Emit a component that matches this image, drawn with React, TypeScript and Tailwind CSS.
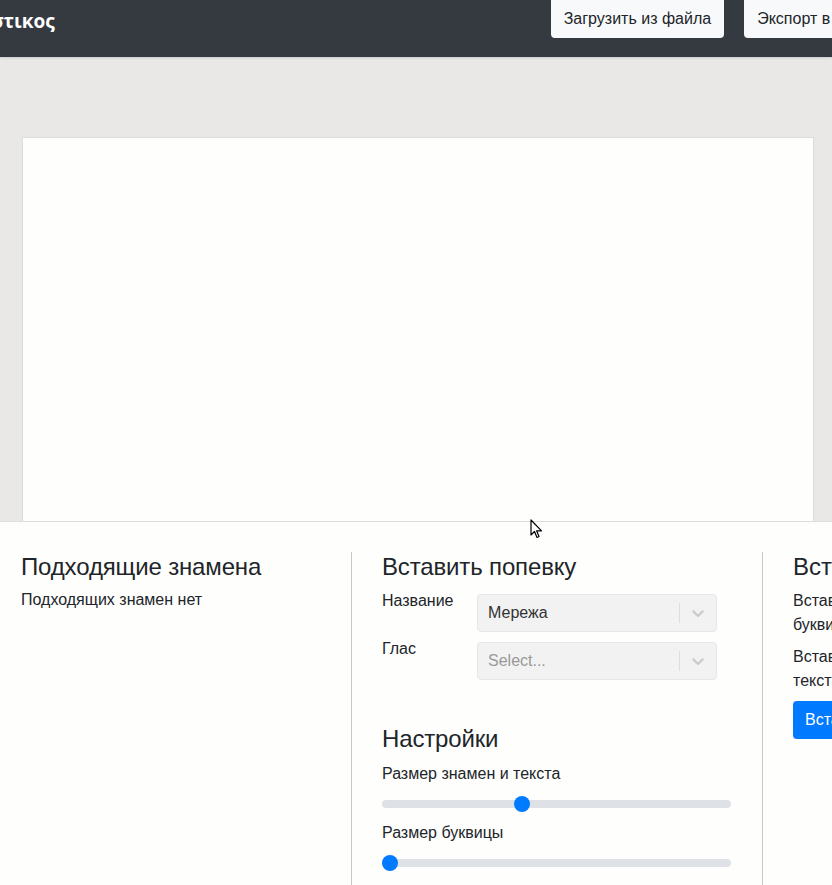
import React from "react";

const font = { fontFamily: '"Liberation Sans", Arial, sans-serif' };

function Chevron() {
  return (
    <svg width="20" height="20" viewBox="0 0 20 20" fill="#cccccc">
      <path d="M4.516 7.548c0.436-0.446 1.043-0.481 1.576 0l3.908 3.747 3.908-3.747c0.533-0.481 1.141-0.446 1.574 0 0.436 0.445 0.408 1.197 0 1.615-0.406 0.418-4.695 4.502-4.695 4.502-0.217 0.223-0.502 0.335-0.787 0.335s-0.57-0.112-0.789-0.335c0 0-4.287-4.084-4.695-4.502s-0.436-1.17 0-1.615z" />
    </svg>
  );
}

function Select({ value, placeholder }: { value?: string; placeholder?: string }) {
  return (
    <div className="flex h-[38px] w-[240px] items-center rounded-[4px] border border-[#e6e6e6] bg-[#f2f2f2]">
      <div className={"flex-1 px-[10px] text-[16px] " + (value ? "text-[#333333]" : "text-[#999999]")}>
        {value ?? placeholder}
      </div>
      <div className="h-[20px] w-px bg-[#dedede]" />
      <div className="flex w-[36px] items-center justify-center">
        <Chevron />
      </div>
    </div>
  );
}

function Slider({ pos }: { pos: number }) {
  return (
    <div className="relative h-[16px] w-[349px]">
      <div className="absolute left-0 right-0 top-[4px] h-[8px] rounded-full bg-[#dee2e6]" />
      <div
        className="absolute top-0 h-[16px] w-[16px] rounded-full bg-[#007bff]"
        style={{ left: pos }}
      />
    </div>
  );
}

export default function App() {
  return (
    <div className="relative min-h-[885px] w-[832px] overflow-hidden bg-[#e9e8e7] text-[#212529]" style={font}>
      {/* Header */}
      <header className="flex h-[57px] items-start bg-[#343a40] shadow-[0_1px_2px_rgba(0,0,0,0.12)]">
        <div className="ml-[-47px] mt-[9px] whitespace-nowrap text-[19px] font-bold leading-[24px] text-white" style={{ fontFamily: '"Open Sans", "DejaVu Sans", sans-serif' }}>
          Γνωστικος
        </div>
        <div className="ml-auto flex gap-[20px] whitespace-nowrap">
          <button className="h-[38px] rounded-b-[4px] bg-[#f8f9fa] px-[13px] text-[16px] leading-[24px] text-[#212529]">
            Загрузить из файла
          </button>
          <button className="mr-[-56px] h-[38px] rounded-b-[4px] bg-[#f8f9fa] px-[13px] text-[16px] leading-[24px] text-[#212529]">
            Экспорт в файл
          </button>
        </div>
      </header>

      {/* Canvas area */}
      <div className="px-[22px] pt-[80px]">
        <div className="h-[384px] w-[792px] border border-b-0 border-[#dcdcdc] bg-[#fefefd]" />
      </div>

      {/* Bottom panel */}
      <div className="flex h-[364px] border-t border-[#dedede] bg-[#fefefd] pt-[30px]">
        <div className="w-[352px] shrink-0 border-r border-[#c8c8c8] pl-[21px]">
          <h4 className="text-[24px] leading-[29px] tracking-[-0.15px]">Подходящие знамена</h4>
          <p className="mt-[7px] text-[16px] leading-[24px]">Подходящих знамен нет</p>
        </div>
        <div className="w-[411px] shrink-0 border-r border-[#c8c8c8] pl-[30px] pr-[30px]">
          <h4 className="text-[24px] leading-[29px] tracking-[-0.15px]">Вставить попевку</h4>
          <div className="mt-[13px] flex flex-col gap-[10px]">
            <div className="flex items-start">
              <div className="w-[95px] text-[16px] leading-[24px] -mt-[5px]">Название</div>
              <Select value="Мережа" />
            </div>
            <div className="flex items-start">
              <div className="w-[95px] text-[16px] leading-[24px] -mt-[5px]">Глас</div>
              <Select placeholder="Select..." />
            </div>
          </div>
          <h4 className="mt-[44px] text-[24px] leading-[29px] tracking-[-0.15px]">Настройки</h4>
          <div className="mt-[9px] text-[16px] leading-[24px]">Размер знамен и текста</div>
          <div className="mt-[10px]">
            <Slider pos={132} />
          </div>
          <div className="mt-[9px] text-[16px] leading-[24px]">Размер буквицы</div>
          <div className="mt-[10px]">
            <Slider pos={0} />
          </div>
        </div>
        <div className="shrink-0 pl-[30px] whitespace-nowrap">
          <h4 className="text-[24px] leading-[29px]">Вставить буквицу</h4>
          <p className="mt-[8px] text-[16px] leading-[24px]">
            Вставляет выделенный символ в виде
            <br />
            буквицы
          </p>
          <p className="mt-[8px] text-[16px] leading-[24px]">
            Вставляет буквицу в начало
            <br />
            текста
          </p>
          <button className="mt-[8px] h-[38px] rounded-[4px] bg-[#007bff] px-[12px] text-[16px] leading-[24px] text-white">
            Вставить буквицу
          </button>
        </div>
      </div>

      {/* Mouse cursor */}
      <svg className="absolute left-[530px] top-[519px]" width="14" height="21" viewBox="0 0 14 21">
        <path d="M1 1 L1 16 L4.5 12.5 L7 18.5 L9 17.5 L6.6 11.8 L11.5 11.8 Z" fill="white" stroke="black" strokeWidth="1.2" strokeLinejoin="round" />
      </svg>
    </div>
  );
}
